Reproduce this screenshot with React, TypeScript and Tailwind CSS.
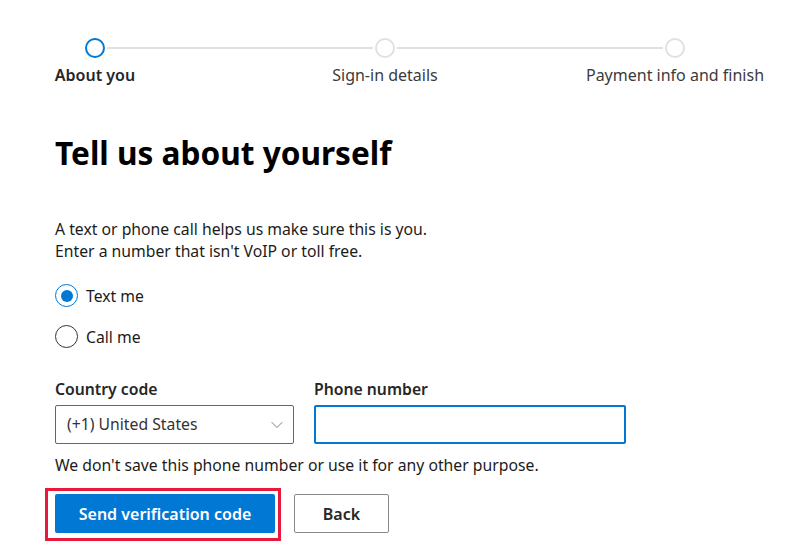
import { ChevronDown } from "lucide-react";

const steps = ["About you", "Sign-in details", "Payment info and finish"];

function StepCircle({ active }: { active?: boolean }) {
  return (
    <span
      className={
        active
          ? "block h-[20px] w-[20px] shrink-0 rounded-full border-2 border-[#0078d4]"
          : "block h-[20px] w-[20px] shrink-0 rounded-full border-2 border-[#e1e1e1]"
      }
    />
  );
}

function Radio({ checked, label }: { checked?: boolean; label: string }) {
  return (
    <label className="flex items-center gap-[8px]">
      <span
        className={
          checked
            ? "flex h-[23px] w-[23px] items-center justify-center rounded-full border border-[#0078d4]"
            : "flex h-[23px] w-[23px] items-center justify-center rounded-full border border-[#333]"
        }
      >
        {checked ? <span className="h-[12px] w-[12px] rounded-full bg-[#0078d4]" /> : null}
      </span>
      <span className="text-[15.75px] leading-[22px] text-[#1b1b1b]">{label}</span>
    </label>
  );
}

export default function App() {
  return (
    <div className="h-[556px] w-[799px] overflow-hidden bg-white font-['Segoe_UI','Noto_Sans',sans-serif] text-[#1b1b1b]">
      {/* stepper */}
      <div className="pt-[38px]">
        <div className="flex items-center pl-[85px]">
          <StepCircle active />
          <span className="mx-[2px] h-[2px] w-[266px] bg-[#e1e1e1]" />
          <StepCircle />
          <span className="mx-[2px] h-[2px] w-[266px] bg-[#e1e1e1]" />
          <StepCircle />
        </div>
        <div className="mt-[6px] flex gap-[110px] pl-[5px]">
          {steps.map((s, i) => (
            <div
              key={s}
              className={
                i === 0
                  ? "w-[180px] text-center text-[16px] leading-[22px] font-semibold text-[#262626]"
                  : "w-[180px] text-center text-[16px] leading-[22px] text-[#3b3b3b]"
              }
            >
              {s}
            </div>
          ))}
        </div>
      </div>

      <div className="pl-[55px]">
        <h1 className="mt-[47px] text-[31.6px] leading-[40px] font-bold text-black">
          Tell us about yourself
        </h1>

        <p className="mt-[45px] text-[15.75px] leading-[22px]">
          A text or phone call helps us make sure this is you.
          <br />
          Enter a number that isn't VoIP or toll free.
        </p>

        <div className="mt-[22px] flex flex-col gap-[18px]">
          <Radio checked label="Text me" />
          <Radio label="Call me" />
        </div>

        <div className="mt-[30px] flex gap-[20px]">
          <div className="flex flex-col">
            <span className="text-[15.75px] leading-[22px] font-semibold text-[#262626]">Country code</span>
            <div className="mt-[5px] flex h-[39px] w-[239px] items-center justify-between rounded-[2px] border border-[#666] pl-[11px] pr-[6px]">
              <span className="text-[15.75px] text-[#333]">(+1) United States</span>
              <ChevronDown className="h-[20px] w-[20px] text-[#666]" strokeWidth={1} />
            </div>
          </div>
          <div className="flex flex-col">
            <span className="text-[15.75px] leading-[22px] font-semibold text-[#262626]">Phone number</span>
            <input
              className="mt-[5px] h-[39px] w-[312px] rounded-[2px] border-2 border-[#0078d4] outline-none"
              type="tel"
            />
          </div>
        </div>

        <p className="mt-[10px] text-[15.75px] leading-[22px]">
          We don't save this phone number or use it for any other purpose.
        </p>

        <div className="mt-[18px] flex items-center gap-[19px]">
          <div className="relative">
            <button className="h-[39px] w-[220px] rounded-[2px] bg-[#0078d4] text-[16px] font-semibold text-white">
              Send verification code
            </button>
            <span className="pointer-events-none absolute -left-[10px] -top-[6px] -bottom-[8px] -right-[6px] border-[3px] border-[#e81a3b]" />
          </div>
          <button className="h-[39px] w-[95px] rounded-[2px] border border-[#8a8a8a] bg-white text-[16px] font-semibold text-[#262626]">
            Back
          </button>
        </div>
      </div>
    </div>
  );
}
